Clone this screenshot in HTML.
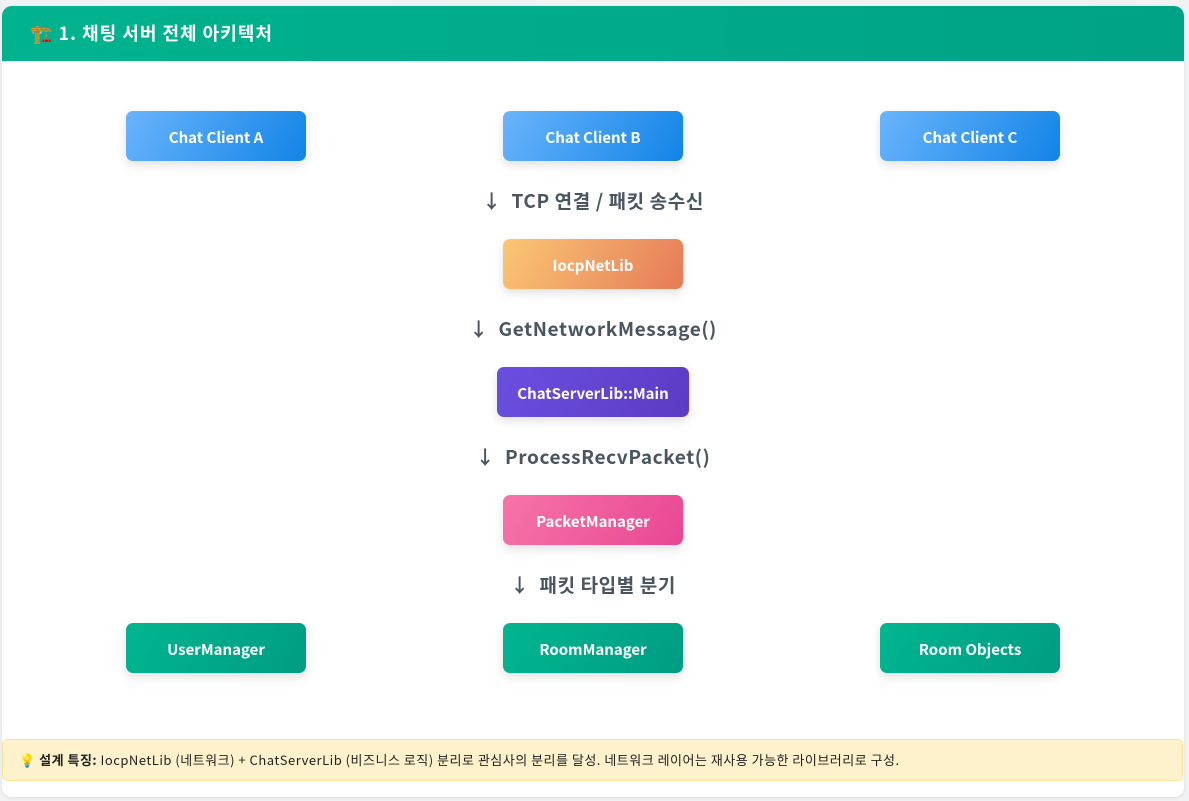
<!DOCTYPE html>
<html><head><meta charset="utf-8"><style>
*{box-sizing:border-box;margin:0;padding:0}
body{width:1189px;height:801px;background:#f1f2f4;font-family:"Noto Sans CJK KR","Liberation Sans",sans-serif;position:relative;overflow:hidden}
.card{position:absolute;left:2px;top:6px;width:1182px;height:791px;background:#fff;border-radius:10px;overflow:hidden;box-shadow:0 1px 4px rgba(0,0,0,.08)}
.hd{height:55px;background:linear-gradient(90deg,#00b38e,#00a286);color:#fff;font-weight:bold;font-size:18px;letter-spacing:1px;padding-left:28px;line-height:55px}
.b{position:absolute;width:180px;height:50px;border-radius:7px;color:#fff;font-weight:bold;font-size:15px;display:flex;align-items:center;justify-content:center;box-shadow:0 4px 10px rgba(0,0,0,.12);padding-top:2px}
.blue{background:linear-gradient(120deg,#6ab4fc,#1284e6)}
.or{background:linear-gradient(120deg,#fbc774,#e57b58)}
.pu{background:linear-gradient(120deg,#6a4fe0,#5c3bc4)}
.pk{background:linear-gradient(120deg,#f774a8,#e84793)}
.gr{background:linear-gradient(120deg,#00b690,#009c82)}
.ar{position:absolute;left:0;width:1182px;text-align:center;font-weight:bold;font-size:19px;letter-spacing:.6px;color:#4a5560;line-height:28px;white-space:pre}
.note{position:absolute;left:0;top:733px;width:1181px;height:42px;background:#fef2cc;border:1px solid #fbe39a;border-radius:5px;font-size:13px;letter-spacing:.5px;line-height:40px;padding-left:16px;color:#222;white-space:nowrap}
</style></head><body>
<div class="card">
<div class="hd">🏗️ 1. 채팅 서버 전체 아키텍처</div>
<div class="b blue" style="left:124px;top:105px">Chat Client A</div>
<div class="b blue" style="left:501px;top:105px">Chat Client B</div>
<div class="b blue" style="left:878px;top:105px">Chat Client C</div>
<div class="ar" style="top:181px">↓  TCP 연결 / 패킷 송수신</div>
<div class="b or" style="left:501px;top:233px">IocpNetLib</div>
<div class="ar" style="top:309px">↓  GetNetworkMessage()</div>
<div class="b pu" style="left:495px;top:361px;width:192px">ChatServerLib::Main</div>
<div class="ar" style="top:437px">↓  ProcessRecvPacket()</div>
<div class="b pk" style="left:501px;top:489px">PacketManager</div>
<div class="ar" style="top:565px">↓  패킷 타입별 분기</div>
<div class="b gr" style="left:124px;top:617px">UserManager</div>
<div class="b gr" style="left:501px;top:617px">RoomManager</div>
<div class="b gr" style="left:878px;top:617px">Room Objects</div>
<div class="note">💡 <b>설계 특징:</b> IocpNetLib (네트워크) + ChatServerLib (비즈니스 로직) 분리로 관심사의 분리를 달성. 네트워크 레이어는 재사용 가능한 라이브러리로 구성.</div>
</div>
</body></html>
